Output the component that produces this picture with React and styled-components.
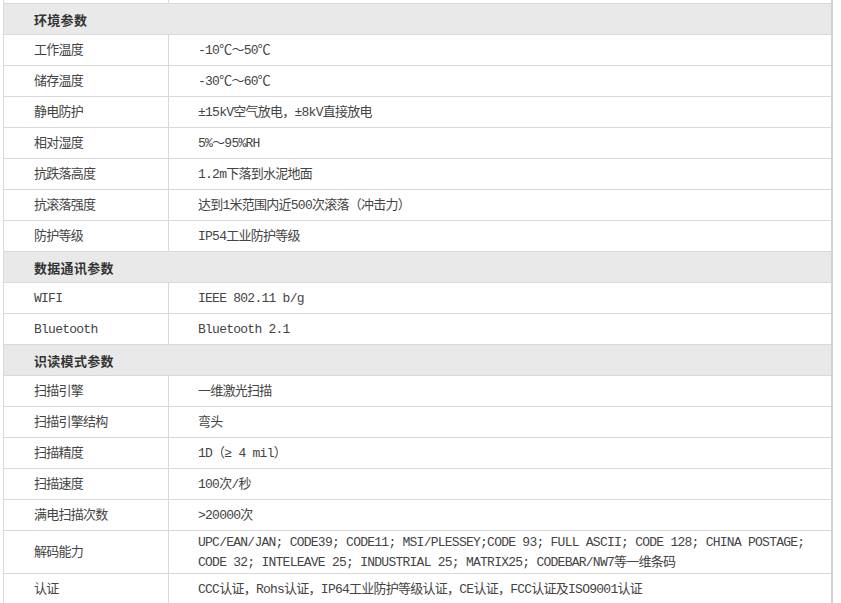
import React from 'react'
import styled, { createGlobalStyle } from 'styled-components'

const GlobalStyle = createGlobalStyle`
  html, body {
    margin: 0;
    padding: 0;
    background: #ffffff;
  }
  body {
    font-family: "Liberation Mono", "Noto Sans CJK SC", monospace;
  }
`

const Page = styled.div`
  width: 841px;
  height: 603px;
  overflow: hidden;
  background: #fff;
  padding-left: 3px;
  box-sizing: border-box;
`

const Table = styled.div`
  width: 830px;
  border-left: 1px solid #d9d9d9;
  border-right: 2px solid #d2d2d2;
  box-sizing: border-box;
`

const Row = styled.div`
  display: grid;
  grid-template-columns: 165px 1fr;
  border-bottom: 1px solid #d9d9d9;
  min-height: ${p => p.$tall ? '40px' : '30px'};
`

const Stub = styled(Row)`
  min-height: 3px;
  height: 3px;
`

const Cell = styled.div`
  display: flex;
  align-items: center;
  box-sizing: border-box;
  padding-top: 2px;
  font-size: 13px;
  letter-spacing: -0.75px;
  color: #444;
  line-height: 20px;
`

const Label = styled(Cell)`
  padding-left: 30px;
  border-right: 1px solid #d9d9d9;
`

const Value = styled(Cell)`
  padding-left: 29px;
  white-space: nowrap;
`

const Section = styled.div`
  height: 30px;
  display: flex;
  align-items: center;
  padding-left: 30px;
  background: #e9e9e9;
  border-bottom: 1px solid #d9d9d9;
  font-family: "Noto Sans CJK SC", sans-serif;
  font-size: 13px;
  font-weight: 700;
  color: #333;
  letter-spacing: 0.3px;
`

const Lines = styled.div`
  display: flex;
  flex-direction: column;
`

const groups = [
  {
    title: '环境参数',
    rows: [
      ['工作温度', '-10℃～50℃'],
      ['储存温度', '-30℃～60℃'],
      ['静电防护', '±15kV空气放电，±8kV直接放电'],
      ['相对湿度', '5%～95%RH'],
      ['抗跌落高度', '1.2m下落到水泥地面'],
      ['抗滚落强度', '达到1米范围内近500次滚落（冲击力）'],
      ['防护等级', 'IP54工业防护等级'],
    ],
  },
  {
    title: '数据通讯参数',
    rows: [
      ['WIFI', 'IEEE 802.11 b/g'],
      ['Bluetooth', 'Bluetooth 2.1'],
    ],
  },
  {
    title: '识读模式参数',
    rows: [
      ['扫描引擎', '一维激光扫描'],
      ['扫描引擎结构', '弯头'],
      ['扫描精度', '1D（≥ 4 mil）'],
      ['扫描速度', '100次/秒'],
      ['满电扫描次数', '>20000次'],
      ['解码能力', [
        'UPC/EAN/JAN; CODE39; CODE11; MSI/PLESSEY;CODE 93; FULL ASCII; CODE 128; CHINA POSTAGE;',
        'CODE 32; INTELEAVE 25; INDUSTRIAL 25; MATRIX25; CODEBAR/NW7等一维条码',
      ]],
      ['认证', 'CCC认证，Rohs认证，IP64工业防护等级认证，CE认证，FCC认证及ISO9001认证'],
    ],
  },
]

const App = () => {
  return (
    <Page>
      <GlobalStyle />
      <Table>
        <Stub>
          <Label />
          <Value />
        </Stub>
        {groups.map(g => (
          <React.Fragment key={g.title}>
            <Section>{g.title}</Section>
            {g.rows.map(([label, value]) => {
              const multi = Array.isArray(value)
              return (
                <Row key={label} $tall={multi}>
                  <Label>{label}</Label>
                  <Value>
                    {multi ? (
                      <Lines>
                        {value.map(line => <span key={line}>{line}</span>)}
                      </Lines>
                    ) : value}
                  </Value>
                </Row>
              )
            })}
          </React.Fragment>
        ))}
      </Table>
    </Page>
  )
}

export default App
